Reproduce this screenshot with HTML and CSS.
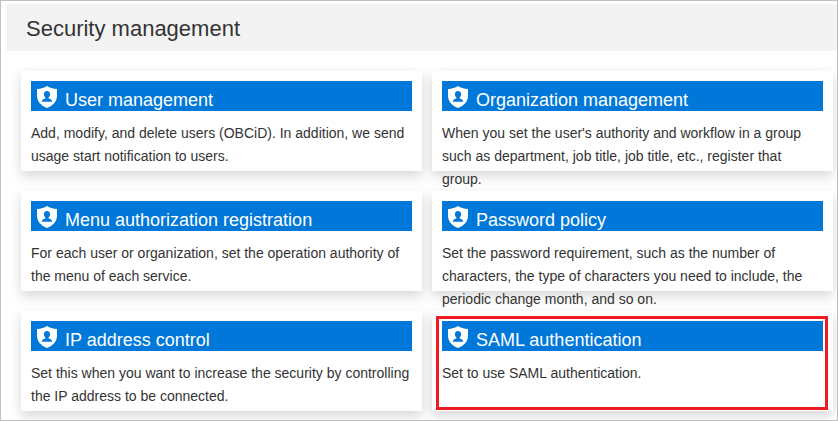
FILE: index.html
```
<!DOCTYPE html>
<html lang="en">
<head>
<meta charset="utf-8">
<title>Security management</title>
<link rel="stylesheet" href="styles.css">
</head>
<body>
<svg class="defs" aria-hidden="true">
  <symbol id="shield" viewBox="0 0 20 22">
    <path fill="#fff" d="M10 0C7.400 1.800 4 2.800 0 3V9.500C0 15.500 4 19.700 10 22C16 19.700 20 15.500 20 9.500V3C16 2.800 12.600 1.800 10 0Z"/>
    <path fill="#0078d9" d="M10 5C8 5 6.900 6.400 6.900 8.200C6.900 9.600 7.600 10.800 8.500 11.400V12.200C7.300 13.100 5 12.900 4.900 15.800H15.100C15 12.900 12.700 13.100 11.500 12.200V11.400C12.400 10.800 13.100 9.600 13.100 8.200C13.100 6.400 12 5 10 5Z"/>
  </symbol>
</svg>
<div class="page">
  <h1 class="title">Security management</h1>
  <main class="grid">
    <section class="card">
      <h2 class="head"><svg class="icon"><use href="#shield"/></svg><span>User management</span></h2>
      <p class="text">Add, modify, and delete users (OBCiD). In addition, we send<br>usage start notification to users.</p>
    </section>
    <section class="card">
      <h2 class="head"><svg class="icon"><use href="#shield"/></svg><span>Organization management</span></h2>
      <p class="text">When you set the user's authority and workflow in a group<br>such as department, job title, job title, etc., register that<br>group.</p>
    </section>
    <section class="card">
      <h2 class="head"><svg class="icon"><use href="#shield"/></svg><span>Menu authorization registration</span></h2>
      <p class="text">For each user or organization, set the operation authority of<br>the menu of each service.</p>
    </section>
    <section class="card">
      <h2 class="head"><svg class="icon"><use href="#shield"/></svg><span>Password policy</span></h2>
      <p class="text">Set the password requirement, such as the number of<br>characters, the type of characters you need to include, the<br>periodic change month, and so on.</p>
    </section>
    <section class="card">
      <h2 class="head"><svg class="icon"><use href="#shield"/></svg><span>IP address control</span></h2>
      <p class="text">Set this when you want to increase the security by controlling<br>the IP address to be connected.</p>
    </section>
    <section class="card selected">
      <h2 class="head"><svg class="icon"><use href="#shield"/></svg><span>SAML authentication</span></h2>
      <p class="text">Set to use SAML authentication.</p>
    </section>
  </main>
</div>
</body>
</html>
```
FILE: styles.css
```
* { box-sizing: border-box; }
body {
  margin: 0;
  background: #fff;
  color: #333;
  font-family: "Liberation Sans", Arial, sans-serif;
}
.defs { display: none; }
.page {
  width: 838px;
  height: 421px;
  border: 1px solid #c0c0c0;
  padding: 3px 0 0 5px;
  overflow: hidden;
}
.title {
  margin: 0;
  height: 47px;
  padding-left: 20px;
  background: #f3f3f3;
  font-size: 22px;
  font-weight: 400;
  line-height: 49px;
}
.grid {
  display: grid;
  grid-template-columns: 401px 401px;
  grid-auto-rows: 100px;
  gap: 20px 10px;
  padding: 20px 0 0 15px;
}
.card {
  padding: 10px;
  background: #fff;
  box-shadow: 0 5px 12px rgba(0, 0, 0, 0.16);
}
.head {
  display: flex;
  height: 30px;
  margin: 0;
  padding: 5px 0 0 6px;
  gap: 8px;
  background: #0078d9;
  color: #fff;
  font-size: 18px;
  font-weight: 400;
  line-height: 28px;
  white-space: nowrap;
}
.icon { width: 20px; height: 22px; flex: none; }
.text {
  position: relative;
  margin: 11px 0 0;
  font-size: 14px;
  line-height: 23px;
  white-space: nowrap;
}
.selected { position: relative; }
.selected::after {
  content: "";
  box-sizing: border-box;
  position: absolute;
  top: 5px;
  left: 4px;
  width: 392px;
  height: 94px;
  border: 3px solid #ed1c24;
}
```
